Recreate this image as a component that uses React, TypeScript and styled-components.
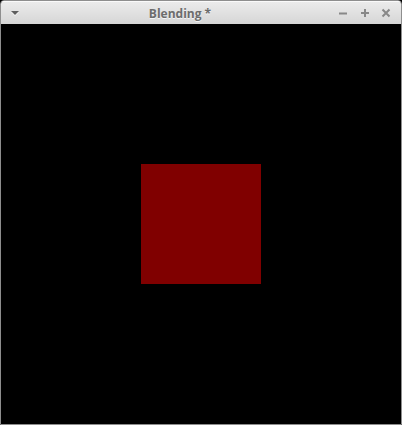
import React from "react";
import styled, { createGlobalStyle } from "styled-components";

const Global = createGlobalStyle`
    html, body {
        margin: 0;
        padding: 0;
        background: #000;
    }
`;

const Window = styled.div`
    box-sizing: border-box;
    width: 402px;
    height: 425px;
    display: flex;
    flex-direction: column;
    border: 1px solid #8e8e8e;
    border-radius: 4px 4px 0 0;
    overflow: hidden;
    background: #000;
`;

const TitleBar = styled.div`
    height: 23px;
    flex: none;
    display: grid;
    grid-template-columns: 60px 1fr 60px;
    align-items: center;
    background: linear-gradient(#ececec, #d6d6d6);
    box-shadow: inset 0 1px 0 #fafafa;
    font-family: "Open Sans", "DejaVu Sans", sans-serif;
`;

const Title = styled.div`
    text-align: center;
    font-size: 12px;
    font-weight: 700;
    color: #6c6c6c;
    text-shadow: 0 1px 0 #f4f4f4;
    padding-right: 42px;
    padding-top: 1px;
`;

const Left = styled.div`
    display: flex;
    align-items: center;
    padding-left: 9px;
`;

const Controls = styled.div`
    display: flex;
    align-items: center;
    justify-content: flex-end;
    padding-right: 11px;
    margin-left: -40px;
`;

const Button = styled.svg<{ gap: number }>`
    display: block;
    width: 8px;
    height: 8px;
    margin-left: ${(p) => p.gap}px;
    overflow: visible;
`;

const Canvas = styled.div`
    flex: 1;
    display: flex;
    align-items: center;
    justify-content: center;
    background: #000;
`;

const Square = styled.div`
    width: 120px;
    height: 120px;
    background: #800000;
`;

const icon = "#888";

const App = () => (
    <>
        <Global />
        <Window>
            <TitleBar>
                <Left>
                    <svg width="10" height="8" viewBox="0 0 10 8">
                        <path d="M1 2h8l-4 4z" fill="#f6f6f6" transform="translate(0 1)" />
                        <path d="M1 2h8l-4 4z" fill="#5e5e5e" />
                    </svg>
                </Left>
                <Title>Blending *</Title>
                <Controls>
                    <Button gap={0} viewBox="0 0 8 8">
                        <path d="M0 4.5h8" stroke={icon} strokeWidth="2" />
                    </Button>
                    <Button gap={14} viewBox="0 0 8 8">
                        <path d="M0 4h8M4 0v8" stroke={icon} strokeWidth="2" />
                    </Button>
                    <Button gap={13} viewBox="0 0 8 8">
                        <path d="M0.5 0.5l7 7M7.5 0.5l-7 7" stroke={icon} strokeWidth="2" />
                    </Button>
                </Controls>
            </TitleBar>
            <Canvas>
                <Square />
            </Canvas>
        </Window>
    </>
);

export default App;
